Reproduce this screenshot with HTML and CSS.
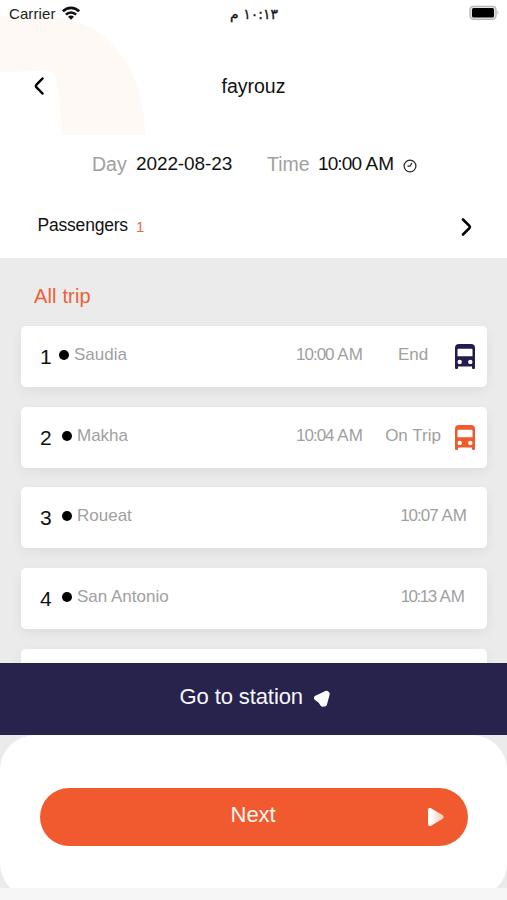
FILE: index.html
```html
<!DOCTYPE html>
<html lang="en">
<head>
<meta charset="utf-8">
<title>fayrouz</title>
<link rel="stylesheet" href="styles.css">
</head>
<body>
<header class="top">
  <svg class="arc" width="150" height="140" viewBox="0 0 150 140"><path d="M0 16C24 15 50 14 78 22C119 36 145 82 145 135H61C61 103 57 78 53 72C40 69 18 73 0 72Z" fill="#fef9f5"/></svg>
  <div class="status">
    <span class="carrier">Carrier</span>
    <svg class="wifi" width="18" height="14" viewBox="0 0 18 14"><g fill="none" stroke="#111" stroke-width="2.6"><path d="M.9 5.300C5.500.7 12.500.7 17.100 5.300"/><path d="M3.900 8.700C6.800 5.800 11.200 5.800 14.100 8.700"/></g><path d="M9 13.700L6 10.800C7.700 9.200 10.300 9.200 12 10.800Z" fill="#111"/></svg>
    <span class="clock" dir="rtl" lang="ar">١٠:١٣ م</span>
    <svg class="battery" width="31" height="16" viewBox="0 0 31 16"><rect x="1" y="1.300" width="26" height="13" rx="3.500" fill="#e4e4e4" stroke="#b5b5b5" stroke-width="1.300"/><rect x="3" y="3" width="22" height="9.500" rx="1.500" fill="#000"/><path d="M28.500 5.500q2 2 0 4z" fill="#b5b5b5"/></svg>
  </div>
  <div class="titlebar">
    <svg class="back" width="12" height="20" viewBox="0 0 12 20"><path d="M9.500 2.500L3.300 8.900Q2.300 10 3.300 11.100L9.500 17.500" fill="none" stroke="#000" stroke-width="2.500" stroke-linecap="round"/></svg>
    <h1 class="title">fayrouz</h1>
  </div>
  <div class="when">
    <span class="label day">Day</span><span class="date">2022-08-23</span>
    <span class="label time">Time</span><span class="hour"><span class="digits">10:00</span> AM</span>
    <svg class="watch" width="14" height="14" viewBox="0 0 14 14"><g fill="none" stroke="#222" stroke-width="1.200" stroke-linecap="round"><circle cx="7" cy="7" r="5.900"/><path d="M8.700 4.400L6.900 7.200H5"/></g></svg>
  </div>
  <div class="passengers">
    <span class="plabel">Passengers</span><span class="count">1</span>
    <svg class="forward" width="13" height="20" viewBox="0 0 13 20"><path d="M3 2.500L9.400 8.900Q10.400 10 9.400 11.100L3 17.500" fill="none" stroke="#000" stroke-width="2.600" stroke-linecap="round"/></svg>
  </div>
</header>
<main class="trips">
  <h2 class="heading">All trip</h2>
  <div class="card"><span class="num one">1</span><i class="dot"></i><span class="stop">Saudia</span><span class="at"><span class="digits">10:00</span> AM</span><span class="state">End</span>
    <svg class="bus navy" width="20" height="25" viewBox="0 0 20 25"><path fill="currentColor" fill-rule="evenodd" d="M4 0H16Q20 0 20 4V24Q20 25 19 25H18Q17 25 17 24V22.500H3V24Q3 25 2 25H1Q0 25 0 24V4Q0 0 4 0ZM3.500 4.800Q2.500 4.800 2.500 5.800V12.300H17.500V5.800Q17.500 4.800 16.500 4.800ZM4.700 15.700A2.200 2.200 0 1 0 4.700 20.100A2.200 2.200 0 1 0 4.700 15.700ZM15.300 15.700A2.200 2.200 0 1 0 15.300 20.100A2.200 2.200 0 1 0 15.300 15.700Z"/></svg></div>
  <div class="card"><span class="num">2</span><i class="dot"></i><span class="stop">Makha</span><span class="at"><span class="digits">10:04</span> AM</span><span class="state">On Trip</span>
    <svg class="bus orange" width="20" height="25" viewBox="0 0 20 25"><path fill="currentColor" fill-rule="evenodd" d="M4 0H16Q20 0 20 4V24Q20 25 19 25H18Q17 25 17 24V22.500H3V24Q3 25 2 25H1Q0 25 0 24V4Q0 0 4 0ZM3.500 4.800Q2.500 4.800 2.500 5.800V12.300H17.500V5.800Q17.500 4.800 16.500 4.800ZM4.700 15.700A2.200 2.200 0 1 0 4.700 20.100A2.200 2.200 0 1 0 4.700 15.700ZM15.300 15.700A2.200 2.200 0 1 0 15.300 20.100A2.200 2.200 0 1 0 15.300 15.700Z"/></svg></div>
  <div class="card"><span class="num">3</span><i class="dot"></i><span class="stop">Roueat</span><span class="at last"><span class="digits">10:07</span> AM</span></div>
  <div class="card"><span class="num">4</span><i class="dot"></i><span class="stop">San Antonio</span><span class="at last narrow"><span class="digits">10:13</span> AM</span></div>
  <div class="card"></div>
</main>
<div class="station">
  <span>Go to station</span>
  <svg class="pointer" width="18" height="18" viewBox="0 0 18 18"><path d="M3.500 8L13.500 3.200L14.200 4L11.500 14L9.600 14.200L7.500 10.900Z" fill="#fff" stroke="#fff" stroke-width="5" stroke-linejoin="round"/></svg>
</div>
<footer class="bottom">
  <div class="sheet">
    <div class="next" role="button"><span class="nlabel">Next</span>
      <svg class="play" width="18" height="20" viewBox="0 0 18 20"><defs><linearGradient id="fade"><stop offset=".2" stop-color="#fff"/><stop offset="1" stop-color="#fbc4b2"/></linearGradient></defs><path d="M1 3Q1 .2 4 1.300L15.500 8Q18 10 15.500 12L4 18.700Q1 19.800 1 17Z" fill="url(#fade)"/></svg>
    </div>
  </div>
</footer>
</body>
</html>
```
FILE: styles.css
```css
* { box-sizing: border-box; }
body {
  margin: 0;
  width: 507px;
  height: 900px;
  overflow: hidden;
  display: flex;
  flex-direction: column;
  background: #f6f6f6;
  font-family: "Liberation Sans", sans-serif;
  color: #111;
}
svg { display: block; flex: none; }
span { white-space: nowrap; }
.top { position: relative; height: 258px; background: #fff; flex: none; }
.arc { position: absolute; left: 0; top: 0; }
.status, .titlebar, .when, .passengers { position: relative; display: flex; }
.status { height: 28px; padding: 5px 7px 0 9px; }
.carrier { font-size: 15px; line-height: 18px; width: 47px; color: #222; letter-spacing: .1px; }
.wifi { margin: 1px 0 0 6px; }
.clock { margin-left: 144px; width: 60px; text-align: center; font: 14px/18px "DejaVu Sans", sans-serif; letter-spacing: -1.500px; -webkit-text-stroke: .3px #111; }
.battery { margin-left: auto; }
.titlebar { height: 112px; padding-top: 48px; }
.back { margin: 0 0 0 33px; }
.title { margin: -1px 0 0 176.500px; font-size: 19.500px; line-height: 22px; font-weight: 400; }
.when { height: 68px; padding: 13px 0 0 92px; font-size: 19.500px; line-height: 22px; }
.label { color: #a0a0a0; }
.day { width: 44px; }
.date { width: 131px; font-size: 19px; letter-spacing: -0.100px; }
.time { width: 51px; }
.hour { width: 78px; font-size: 19px; letter-spacing: .1px; }
.hour .digits { letter-spacing: -0.900px; }
.digits { letter-spacing: -1px; }
.watch { margin: 6px 0 0 7px; }
.passengers { height: 50px; padding: 6px 34px 0 37.500px; font-size: 17.500px; line-height: 22px; }
.plabel { width: 98.500px; letter-spacing: -0.200px; }
.count { font-size: 15px; line-height: 26px; color: #ee6644; }
.forward { margin: 3px 0 0 auto; }
.trips { height: 405px; flex: none; padding: 26px 20px 0 21px; background: #ebebeb; overflow: hidden; }
.heading { margin: 0 0 19px 13px; font-size: 20px; line-height: 24px; height: 23px; font-weight: 400; color: #ed6038; letter-spacing: .15px; }
.card {
  display: flex;
  height: 61px;
  margin-bottom: 19.700px;
  padding: 18px 12px 0 19px;
  border-radius: 5px;
  background: #fff;
  box-shadow: 0 4px 12px rgba(0, 0, 0, .06);
}
.num { width: 22px; font-size: 21px; line-height: 26px; }
.one { width: 19px; }
.dot { width: 10px; height: 10px; margin: 6px 5px 0 0; border-radius: 50%; background: #000; flex: none; }
.stop, .at, .state { font-size: 17px; line-height: 22px; color: #a0a0a0; }
.at { margin-left: auto; width: 67px; margin-right: 1px; }
.state { width: 91px; padding-left: 7px; text-align: center; }
.last { width: auto; margin-right: 8px; }
.narrow { margin-right: 10px; }
.narrow .digits { letter-spacing: -1.500px; }
.navy { color: #231d4f; }
.orange { color: #f15a2b; }
.station {
  height: 72px;
  flex: none;
  display: flex;
  padding: 22px 0 0 179.500px;
  background: #27234d;
  color: #f7f7fc;
  font-size: 22px;
  line-height: 24px;
}
.station span { letter-spacing: -0.100px; }
.pointer { margin: 5px 0 0 10px; }
.bottom { height: 153px; flex: none; overflow: hidden; background: #ebebeb; }
.sheet { height: 163px; padding: 53px 39px 0 40px; border-radius: 35px; background: #fff; }
.next {
  height: 58px;
  display: flex;
  padding: 14px 23px 0 190.500px;
  border-radius: 29px;
  background: #f15a2f;
  color: #fff5ef;
  font-size: 22px;
  line-height: 26px;
}
.play { margin: 5px 0 0 auto; }
```
